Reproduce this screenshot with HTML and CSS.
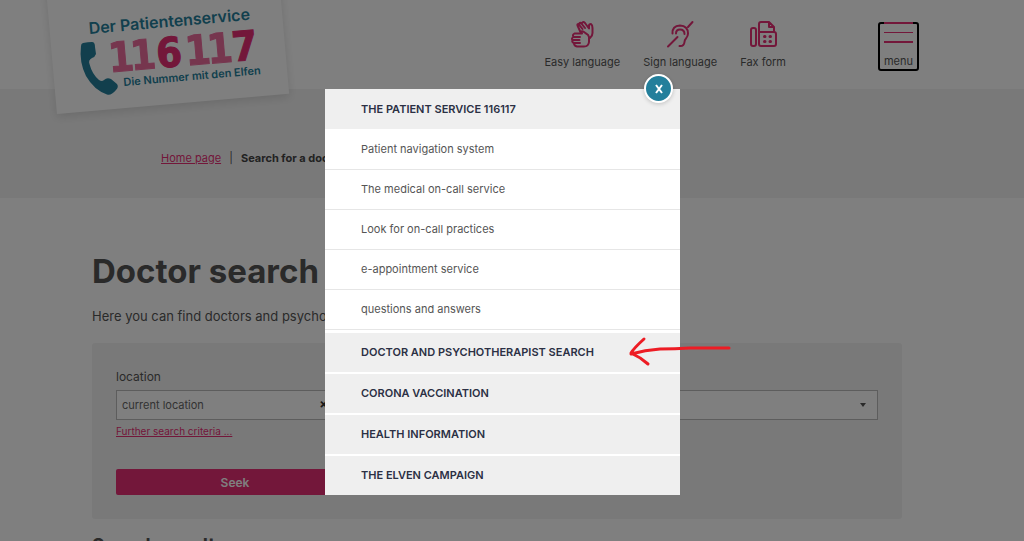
FILE: index.html
```html
<!DOCTYPE html>
<html lang="en">
<head>
  <meta charset="UTF-8">
  <meta name="viewport" content="width=device-width, initial-scale=1.0">
  <title>Doctor search - 116117</title>
  <link rel="stylesheet" href="styles.css">
</head>
<body>
  <header class="header">
    <a class="logo" href="#" aria-label="116117 home">
      <svg width="300" height="130" viewBox="0 0 300 130">
        <g transform="translate(57 114) rotate(-5)">
          <rect class="logo-card" x="0" y="-140" width="233" height="140"/>
          <text class="logo-blue logo-title" x="39" y="-77">Der Patientenservice</text>
          <text class="logo-number logo-light" x="56 78" y="-37">11</text>
          <text class="logo-number" x="104" y="-37">6</text>
          <text class="logo-number logo-light" x="133 155" y="-37">11</text>
          <text class="logo-number" x="180" y="-37">7</text>
          <text class="logo-blue logo-claim" x="69" y="-22">Die Nummer mit den Elfen</text>
        </g>
        <path class="logo-blue" d="M83 43Q88 42 92 42Q95 42 95 47L96 54Q95 57 92 58Q88 60 89.500 64Q92 74 99 80Q102 82 104 80Q107 77 111 79L117 84Q119 87 116 90Q111 96 107 94.500Q94 90 86 76Q79 62 81 46Q81 43.500 83 43Z"/>
      </svg>
    </a>
    <nav class="top-nav">
      <a href="#">
        <svg class="icon" width="28" height="28" viewBox="0 0 28 28">
          <path d="M12 11L9.500 5.500Q9 4 10.500 4L14.500 9M11.500 4.500Q11 2 13 3L17 8M14 3Q15 1 17 3L21 8.500V5.500Q21 4 23 4Q24.500 5 24.500 8V13Q24.500 16 22 18"/>
          <path d="M12 17H5.500Q4 15 6.500 13.500H14L12.500 12Q14 10.500 16 12L18 13.500Q20.500 14.500 21 17V22Q20.500 26.500 16 26.500H9Q6 26 6 23M11.500 20H4.500Q3 18.500 5.500 17M12 23H6Q3.500 22 4.500 20"/>
        </svg>
        <span>Easy language</span>
      </a>
      <a href="#">
        <svg class="icon" width="28" height="28" viewBox="0 0 28 28">
          <path d="M2 26.500L11.500 17M22 7L26.500 2M6.500 13.500Q6 6 14 5.500Q22 6 22 13.500Q22 16 20 18.500Q18.500 20 18.500 22Q18 26.500 13.500 26"/>
          <path d="M10 13.500Q10 9.500 14 9.500Q18.500 9.500 18.500 14"/>
        </svg>
        <span>Sign language</span>
      </a>
      <a href="#">
        <svg class="icon" width="28" height="28" viewBox="0 0 28 28">
          <rect x="2" y="8" width="5" height="18" rx="2"/>
          <path d="M10 24V4Q10 2 12 2H20L25 7V11M20 2V7H25M10 12H25Q27 12 27 14V24Q27 26 25 26H12Q10 26 10 24"/>
          <path d="M15.500 16.500h.5M21 16.500h.5M15.500 21.500h.5M21 21.500h.5" stroke-width="3"/>
        </svg>
        <span>Fax form</span>
      </a>
      <button class="menu-button" type="button">
        <span class="bar"></span>
        <span class="bar"></span>
        <span class="bar"></span>
        <span class="menu-label">menu</span>
      </button>
    </nav>
  </header>

  <nav class="breadcrumb">
    <a href="#">Home page</a>
    <span class="divider">|</span>
    <strong>Search for a doctor</strong>
  </nav>

  <main class="content">
    <h1>Doctor search</h1>
    <p class="intro">Here you can find doctors and psychotherapists.</p>
    <form class="search-panel">
      <div class="fields">
        <div>
          <label for="location">location</label>
          <div class="location-field">
            <input id="location" type="text" value="current location">
            <button class="clear" type="button" aria-label="Clear">×</button>
          </div>
          <a class="more" href="#">Further search criteria ...</a>
        </div>
        <div>
          <label for="subject">subject</label>
          <div class="select-field">
            <select id="subject"><option></option></select>
          </div>
        </div>
      </div>
      <button class="seek" type="submit">Seek</button>
    </form>
    <h2>Search results</h2>
  </main>

  <div class="overlay">
    <div class="menu" role="dialog" aria-label="menu">
      <button class="close" type="button" aria-label="Close">
        <svg width="10" height="10" viewBox="0 0 10 10"><path d="M2 1L8 9M8 1L2 9"/></svg>
      </button>
      <a class="menu-head" href="#">THE PATIENT SERVICE 116117</a>
      <ul>
        <li><a href="#">Patient navigation system</a></li>
        <li><a href="#">The medical on-call service</a></li>
        <li><a href="#">Look for on-call practices</a></li>
        <li><a href="#">e-appointment service</a></li>
        <li><a href="#">questions and answers</a></li>
      </ul>
      <a class="menu-head" href="#">DOCTOR AND PSYCHOTHERAPIST SEARCH</a>
      <a class="menu-head" href="#">CORONA VACCINATION</a>
      <a class="menu-head" href="#">HEALTH INFORMATION</a>
      <a class="menu-head" href="#">THE ELVEN CAMPAIGN</a>
      <svg class="arrow" width="106" height="32" viewBox="0 0 106 32">
        <path d="M104 12H65Q50 13 35 13Q20 14 6 18M19 3Q9 12 6 17Q15 21 23 28"/>
      </svg>
    </div>
  </div>
</body>
</html>
```

FILE: styles.css
```css
* { box-sizing: border-box; }
body {
  margin: 0;
  height: 100vh;
  overflow: hidden;
  background: #fff;
  color: #555;
  font-family: Inter, "Liberation Sans", sans-serif;
  font-size: 11px;
}
a { color: #e62e75; }
button, input, select { font-family: inherit; }

.header { position: relative; height: 89px; padding: 20px 105px 0 0; }
.logo { position: absolute; top: 0; left: 0; }
.logo-card { fill: #fff; filter: drop-shadow(0 3px 5px rgba(0,0,0,0.12)); }
.logo-blue { fill: #247f9b; }
.logo-title { font-size: 16px; font-weight: 600; }
.logo-claim { font-size: 11px; font-weight: 600; }
.logo-number { font-family: "DejaVu Sans Condensed", "DejaVu Sans", sans-serif; font-size: 41px; font-weight: bold; fill: #e62e75; stroke: #e62e75; stroke-width: 1; }
.logo-light { opacity: 0.7; }

.top-nav { display: flex; justify-content: flex-end; gap: 23px; }
.top-nav a { display: flex; flex-direction: column; align-items: center; gap: 6px; color: #555; text-decoration: none; line-height: 16px; }
.icon { fill: none; stroke: #e62e75; stroke-width: 2; stroke-linecap: round; stroke-linejoin: round; }
.menu-button {
  display: flex;
  flex-direction: column;
  align-items: center;
  gap: 8px;
  width: 41px;
  height: 49px;
  margin: 2px 0 0 69px;
  padding: 0 4px;
  border: 2px solid #000;
  border-radius: 3px;
  background: none;
  color: #555;
  font-size: 11px;
  line-height: 16px;
}
.bar { width: 100%; height: 2px; background: #e62e75; }
.bar:first-child { margin-top: -2px; }
.menu-label { padding-top: 2px; }

.breadcrumb { height: 109px; padding: 60px 0 0 161px; background: #f3f3f3; line-height: 18px; }
.breadcrumb strong { color: #444; }
.divider { margin: 0 5px; }

.content { margin: 0 122px 0 92px; }
h1 { margin: 50px 0 0; color: #555; font-size: 33px; line-height: 46px; }
.intro { margin: 12px 0 17px; font-size: 13px; line-height: 20px; }
h2 { margin: 15px 0; font-size: 19px; line-height: 24px; }
.search-panel { padding: 24px; border-radius: 3px; background: #f3f3f3; }
.fields { display: grid; grid-template-columns: 238px 1fr; gap: 24px; height: 102px; }
label { display: block; margin-bottom: 3px; font-size: 12px; line-height: 20px; }
.location-field, .select-field { position: relative; }
.location-field input, .select-field select {
  width: 100%;
  height: 30px;
  padding: 0 5px;
  border: 1px solid #bbb;
  border-radius: 0;
  background: #fff;
  color: #666;
  font-size: 11px;
  appearance: none;
}
.select-field::after {
  content: "";
  position: absolute;
  top: 13px;
  right: 12px;
  border: 3px solid transparent;
  border-top: 4px solid #555;
}
.clear { position: absolute; top: 5px; right: 26px; padding: 0; border: 0; background: none; color: #333; font-size: 13px; font-weight: bold; line-height: 18px; }
.more { display: block; margin-top: 3px; font-size: 10px; line-height: 16px; }
.seek { width: 238px; height: 26px; padding: 0; border: 0; border-radius: 2px; background: #e62e75; color: #fff; font-size: 12px; font-weight: 600; }

.overlay {
  position: fixed;
  inset: 0;
  display: flex;
  justify-content: center;
  align-items: flex-start;
  padding: 89px 19px 0 0;
  background: rgba(0,0,0,0.5);
}
.menu { position: relative; width: 355px; background: #fff; }
.menu ul { margin: 0; padding: 1px 0; list-style: none; }
.menu li { border-bottom: 1px solid #e6e6e6; }
.menu li a { display: block; padding-left: 36px; color: #555; font-size: 11px; line-height: 39px; text-decoration: none; }
.menu-head { display: block; padding-left: 36px; border-top: 2px solid #fff; background: #efefef; color: #2b3044; font-size: 11px; font-weight: 600; line-height: 39px; text-decoration: none; }
.close + .menu-head { border-top: 0; }
.menu-head:first-of-type { line-height: 40px; }
.close {
  position: absolute;
  top: -15px;
  right: 7px;
  display: flex;
  align-items: center;
  justify-content: center;
  width: 29px;
  height: 29px;
  padding: 0;
  border: 2px solid #fff;
  border-radius: 50%;
  background: #247f9b;
  box-shadow: 0 1px 4px rgba(0,0,0,0.2);
}
.close path { fill: none; stroke: #fff; stroke-width: 2; }
.arrow { position: absolute; top: 247px; left: 300px; fill: none; stroke: #ed1c24; stroke-width: 3; stroke-linecap: round; stroke-linejoin: round; }
```
